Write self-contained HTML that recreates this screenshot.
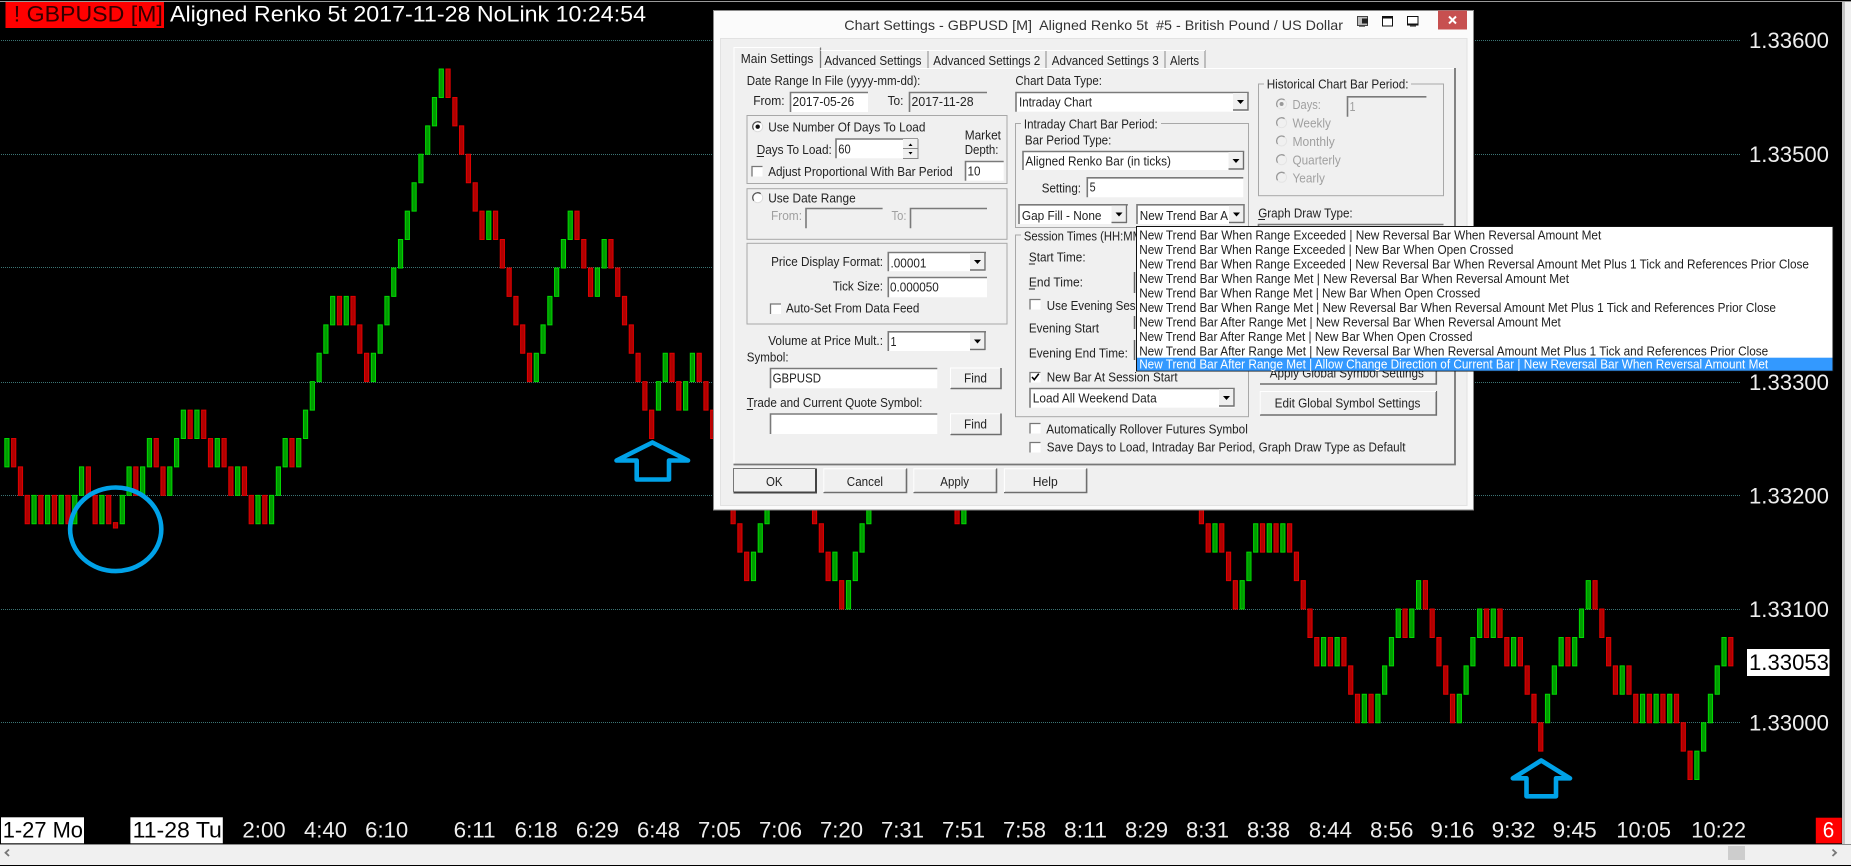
<!DOCTYPE html>
<html>
<head>
<meta charset="utf-8">
<title>Chart Settings</title>
<style>
html,body{margin:0;padding:0;background:#000;overflow:hidden}
svg{display:block}
text{font-family:"Liberation Sans",sans-serif;white-space:pre}
.c{fill:#eee;font-size:22px}
.k{fill:#000;font-size:22px}
.t{fill:#222;font-size:13px}
.d{fill:#a0a0a0;font-size:13px}
.l{fill:#222;font-size:13px}
.f{fill:#fff}
.g{fill:#f0f0f0}
.s{fill:none;stroke:#7a7a7a;stroke-width:1.6}
.b{fill:#f0f0f0}
.bd{fill:none;stroke:#6e6e6e;stroke-width:1.6}
.bw{fill:none;stroke:#fff;stroke-width:1}
.gb{fill:none;stroke:#a8a8a8;stroke-width:1}
.u{stroke:#222;stroke-width:1}
</style>
</head>
<body>
<svg width="1851" height="866" viewBox="0 0 1851 866" xmlns="http://www.w3.org/2000/svg">
<defs>
<g id="rad"><circle r="5" fill="#fff" stroke="#ddd"/><path d="M-4 3A5 5 0 0 1 3-4" fill="none" stroke="#555" stroke-width="1.3"/></g>
<g id="radg"><circle r="5" fill="#f0f0f0" stroke="#e4e4e4"/><path d="M-4 3A5 5 0 0 1 3-4" fill="none" stroke="#999" stroke-width="1.3"/></g>
<g id="chk"><rect width="11" height="10.5" fill="#fff"/><path d="M.5 10.5V.5H11" fill="none" stroke="#777" stroke-width="1.3"/></g>
<g id="arr"><rect width="15" height="17" fill="#f0f0f0"/><path d="M15 0V17H0" fill="none" stroke="#6e6e6e" stroke-width="1.4"/><path d="M4 7h7l-3.5 4z" fill="#000"/></g>
</defs>

<rect width="1851" height="866" fill="#000"/>
<!-- window frame -->
<rect y="1" width="1851" height="1" fill="#9a9a9a"/>
<rect x="1842" y="2" width="3" height="842" fill="#c4c4c4"/>
<rect x="1845" y="2" width="6" height="842" fill="#f0f0f0"/>

<!-- grid -->
<g stroke="#3c7474" stroke-width="1" stroke-dasharray="1 1" shape-rendering="crispEdges">
<path d="M1 40.5H1741M1 154.5H1741M1 267.5H1741M1 382.5H1741M1 495.5H1741M1 609.5H1741M1 722.5H1741"/>
</g>

<!-- renko bars -->
<g transform="translate(4.8,722.7) scale(6.787,-28.42)">
<path fill="#009c00" stroke="#00d800" stroke-width="1" vector-effect="non-scaling-stroke" d="M0 9h.62v1h-.62zM4 7h.62v1h-.62zM6 7h.62v1h-.62zM8 7h.62v1h-.62zM10 7h.62v1h-.62zM11 8h.62v1h-.62zM14 7h.62v1h-.62zM17 7h.62v1h-.62zM18 8h.62v1h-.62zM20 8h.62v1h-.62zM21 9h.62v1h-.62zM24 8h.62v1h-.62zM25 9h.62v1h-.62zM26 10h.62v1h-.62zM28 10h.62v1h-.62zM31 9h.62v1h-.62zM34 8h.62v1h-.62zM37 7h.62v1h-.62zM39 7h.62v1h-.62zM40 8h.62v1h-.62zM41 9h.62v1h-.62zM43 9h.62v1h-.62zM44 10h.62v1h-.62zM45 11h.62v1h-.62zM46 12h.62v1h-.62zM47 13h.62v1h-.62zM48 14h.62v1h-.62zM50 14h.62v1h-.62zM54 12h.62v1h-.62zM55 13h.62v1h-.62zM56 14h.62v1h-.62zM57 15h.62v1h-.62zM58 16h.62v1h-.62zM59 17h.62v1h-.62zM60 18h.62v1h-.62zM61 19h.62v1h-.62zM62 20h.62v1h-.62zM63 21h.62v1h-.62zM64 22h.62v1h-.62zM71 17h.62v1h-.62zM78 12h.62v1h-.62zM79 13h.62v1h-.62zM80 14h.62v1h-.62zM81 15h.62v1h-.62zM82 16h.62v1h-.62zM83 17h.62v1h-.62zM87 15h.62v1h-.62zM88 16h.62v1h-.62zM96 11h.62v1h-.62zM97 12h.62v1h-.62zM100 11h.62v1h-.62zM101 12h.62v1h-.62zM110 5h.62v1h-.62zM111 6h.62v1h-.62zM112 7h.62v1h-.62zM122 5h.62v1h-.62zM124 4h.62v1h-.62zM125 5h.62v1h-.62zM126 6h.62v1h-.62zM127 7h.62v1h-.62zM141 7h.62v1h-.62zM178 6h.62v1h-.62zM182 4h.62v1h-.62zM183 5h.62v1h-.62zM184 6h.62v1h-.62zM186 6h.62v1h-.62zM188 6h.62v1h-.62zM194 2h.62v1h-.62zM196 2h.62v1h-.62zM200 0h.62v1h-.62zM202 0h.62v1h-.62zM203 1h.62v1h-.62zM204 2h.62v1h-.62zM205 3h.62v1h-.62zM207 3h.62v1h-.62zM208 4h.62v1h-.62zM214 0h.62v1h-.62zM215 1h.62v1h-.62zM216 2h.62v1h-.62zM217 3h.62v1h-.62zM219 3h.62v1h-.62zM222 2h.62v1h-.62zM227 0h.62v1h-.62zM228 1h.62v1h-.62zM229 2h.62v1h-.62zM231 2h.62v1h-.62zM232 3h.62v1h-.62zM233 4h.62v1h-.62zM238 1h.62v1h-.62zM241 0h.62v1h-.62zM243 0h.62v1h-.62zM245 0h.62v1h-.62zM249-2h.62v1h-.62zM250-1h.62v1h-.62zM251 0h.62v1h-.62zM252 1h.62v1h-.62zM253 2h.62v1h-.62z"/>
<path fill="#b00000" stroke="#e00000" stroke-width="1" vector-effect="non-scaling-stroke" d="M1 9h.62v1h-.62zM2 8h.62v1h-.62zM3 7h.62v1h-.62zM5 7h.62v1h-.62zM7 7h.62v1h-.62zM9 7h.62v1h-.62zM12 8h.62v1h-.62zM13 7h.62v1h-.62zM15 7h.62v1h-.62zM16 6.85h.62v.19h-.62zM19 8h.62v1h-.62zM22 9h.62v1h-.62zM23 8h.62v1h-.62zM27 10h.62v1h-.62zM29 10h.62v1h-.62zM30 9h.62v1h-.62zM32 9h.62v1h-.62zM33 8h.62v1h-.62zM35 8h.62v1h-.62zM36 7h.62v1h-.62zM38 7h.62v1h-.62zM42 9h.62v1h-.62zM49 14h.62v1h-.62zM51 14h.62v1h-.62zM52 13h.62v1h-.62zM53 12h.62v1h-.62zM65 22h.62v1h-.62zM66 21h.62v1h-.62zM67 20h.62v1h-.62zM68 19h.62v1h-.62zM69 18h.62v1h-.62zM70 17h.62v1h-.62zM72 17h.62v1h-.62zM73 16h.62v1h-.62zM74 15h.62v1h-.62zM75 14h.62v1h-.62zM76 13h.62v1h-.62zM77 12h.62v1h-.62zM84 17h.62v1h-.62zM85 16h.62v1h-.62zM86 15h.62v1h-.62zM89 16h.62v1h-.62zM90 15h.62v1h-.62zM91 14h.62v1h-.62zM92 13h.62v1h-.62zM93 12h.62v1h-.62zM94 11h.62v1h-.62zM95 10h.62v1h-.62zM98 12h.62v1h-.62zM99 11h.62v1h-.62zM102 12h.62v1h-.62zM103 11h.62v1h-.62zM104 10h.62v1h-.62zM107 7h.62v1h-.62zM108 6h.62v1h-.62zM109 5h.62v1h-.62zM119 7h.62v1h-.62zM120 6h.62v1h-.62zM121 5h.62v1h-.62zM123 4h.62v1h-.62zM140 7h.62v1h-.62zM176 7h.62v1h-.62zM177 6h.62v1h-.62zM179 6h.62v1h-.62zM180 5h.62v1h-.62zM181 4h.62v1h-.62zM185 6h.62v1h-.62zM187 6h.62v1h-.62zM189 6h.62v1h-.62zM190 5h.62v1h-.62zM191 4h.62v1h-.62zM192 3h.62v1h-.62zM193 2h.62v1h-.62zM195 2h.62v1h-.62zM197 2h.62v1h-.62zM198 1h.62v1h-.62zM199 0h.62v1h-.62zM201 0h.62v1h-.62zM206 3h.62v1h-.62zM209 4h.62v1h-.62zM210 3h.62v1h-.62zM211 2h.62v1h-.62zM212 1h.62v1h-.62zM213 0h.62v1h-.62zM218 3h.62v1h-.62zM220 3h.62v1h-.62zM221 2h.62v1h-.62zM223 2h.62v1h-.62zM224 1h.62v1h-.62zM225 0h.62v1h-.62zM226-1h.62v1h-.62zM230 2h.62v1h-.62zM234 4h.62v1h-.62zM235 3h.62v1h-.62zM236 2h.62v1h-.62zM237 1h.62v1h-.62zM239 1h.62v1h-.62zM240 0h.62v1h-.62zM242 0h.62v1h-.62zM244 0h.62v1h-.62zM246 0h.62v1h-.62zM247-1h.62v1h-.62zM248-2h.62v1h-.62zM254 2h.62v1h-.62z"/>
</g>

<!-- annotations -->
<ellipse cx="115.7" cy="529.3" rx="45.6" ry="41.8" fill="none" stroke="#00a2e8" stroke-width="4.6"/>
<path d="M652.4 442.5L688 460.5H669V479.5H636.7V460.5H616.5Z" fill="none" stroke="#00a2e8" stroke-width="4.6" stroke-linejoin="round"/>
<path d="M1541.2 760.5L1570 778.3H1556V796.3H1526.5V778.3H1512.8Z" fill="none" stroke="#00a2e8" stroke-width="4.6" stroke-linejoin="round"/>

<!-- header -->
<rect x="5.5" y="2" width="158.5" height="26" fill="#f00"/>
<text x="13.8" y="21.7" font-size="22" fill="#300" textLength="149" lengthAdjust="spacingAndGlyphs">! GBPUSD [M]</text>
<text x="170" y="21.7" font-size="22" fill="#fff" textLength="476" lengthAdjust="spacingAndGlyphs">Aligned Renko 5t 2017-11-28 NoLink 10:24:54</text>

<!-- price axis -->
<text class="c" x="1749" y="48" textLength="80" lengthAdjust="spacingAndGlyphs">1.33600</text>
<text class="c" x="1749" y="162" textLength="80" lengthAdjust="spacingAndGlyphs">1.33500</text>
<text class="c" x="1749" y="275.5" textLength="80" lengthAdjust="spacingAndGlyphs">1.33400</text>
<text class="c" x="1749" y="390" textLength="80" lengthAdjust="spacingAndGlyphs">1.33300</text>
<text class="c" x="1749" y="503.5" textLength="80" lengthAdjust="spacingAndGlyphs">1.33200</text>
<text class="c" x="1749" y="617" textLength="80" lengthAdjust="spacingAndGlyphs">1.33100</text>
<rect x="1747" y="649" width="82.5" height="27" fill="#fff"/>
<text class="k" x="1749" y="670" textLength="80" lengthAdjust="spacingAndGlyphs">1.33053</text>
<text class="c" x="1749" y="730.5" textLength="80" lengthAdjust="spacingAndGlyphs">1.33000</text>

<!-- time axis -->
<rect x="1" y="817.3" width="83" height="26" fill="#fff"/>
<text class="k" x="2.7" y="837.3" textLength="80.3" lengthAdjust="spacingAndGlyphs">1-27 Mo</text>
<rect x="130.4" y="817.3" width="92.4" height="26" fill="#fff"/>
<text class="k" x="132.6" y="837.3" textLength="89.3" lengthAdjust="spacingAndGlyphs">11-28 Tu</text>
<g class="c">
<text class="c" x="242.4" y="837.3" textLength="43.3" lengthAdjust="spacingAndGlyphs">2:00</text>
<text class="c" x="304" y="837.3" textLength="43" lengthAdjust="spacingAndGlyphs">4:40</text>
<text class="c" x="365.2" y="837.3" textLength="43" lengthAdjust="spacingAndGlyphs">6:10</text>
<text class="c" x="453.6" y="837.3" textLength="42" lengthAdjust="spacingAndGlyphs">6:11</text>
<text class="c" x="514.7" y="837.3" textLength="43" lengthAdjust="spacingAndGlyphs">6:18</text>
<text class="c" x="575.9" y="837.3" textLength="43" lengthAdjust="spacingAndGlyphs">6:29</text>
<text class="c" x="637" y="837.3" textLength="43" lengthAdjust="spacingAndGlyphs">6:48</text>
<text class="c" x="698" y="837.3" textLength="43" lengthAdjust="spacingAndGlyphs">7:05</text>
<text class="c" x="759" y="837.3" textLength="43" lengthAdjust="spacingAndGlyphs">7:06</text>
<text class="c" x="820" y="837.3" textLength="43" lengthAdjust="spacingAndGlyphs">7:20</text>
<text class="c" x="881" y="837.3" textLength="43" lengthAdjust="spacingAndGlyphs">7:31</text>
<text class="c" x="942" y="837.3" textLength="43" lengthAdjust="spacingAndGlyphs">7:51</text>
<text class="c" x="1003" y="837.3" textLength="43" lengthAdjust="spacingAndGlyphs">7:58</text>
<text class="c" x="1064" y="837.3" textLength="43" lengthAdjust="spacingAndGlyphs">8:11</text>
<text class="c" x="1125" y="837.3" textLength="43" lengthAdjust="spacingAndGlyphs">8:29</text>
<text class="c" x="1186" y="837.3" textLength="43" lengthAdjust="spacingAndGlyphs">8:31</text>
<text class="c" x="1247" y="837.3" textLength="43" lengthAdjust="spacingAndGlyphs">8:38</text>
<text class="c" x="1308.9" y="837.3" textLength="43" lengthAdjust="spacingAndGlyphs">8:44</text>
<text class="c" x="1370" y="837.3" textLength="43.4" lengthAdjust="spacingAndGlyphs">8:56</text>
<text class="c" x="1430.4" y="837.3" textLength="44" lengthAdjust="spacingAndGlyphs">9:16</text>
<text class="c" x="1491.6" y="837.3" textLength="44" lengthAdjust="spacingAndGlyphs">9:32</text>
<text class="c" x="1552.7" y="837.3" textLength="44" lengthAdjust="spacingAndGlyphs">9:45</text>
<text class="c" x="1616.4" y="837.3" textLength="54.6" lengthAdjust="spacingAndGlyphs">10:05</text>
<text class="c" x="1691.3" y="837.3" textLength="54.7" lengthAdjust="spacingAndGlyphs">10:22</text>
</g>
<rect x="1815.8" y="817.7" width="26" height="25.6" fill="#f00"/>
<text x="1822.8" y="837.3" font-size="22" fill="#fff" textLength="11.5" lengthAdjust="spacingAndGlyphs">6</text>

<!-- scrollbar -->
<rect y="844" width="1851" height="21" fill="#f0f0f0"/>
<rect y="844" width="1851" height="1" fill="#8a8a8a"/>
<rect y="865" width="1851" height="1" fill="#000"/>
<rect x="1728" y="846" width="17" height="14" fill="#cdcdcd"/>
<path d="M9 849.5L5.5 852.7L9 856M1832.5 849.5L1836 852.7L1832.5 856" fill="none" stroke="#777" stroke-width="1.8"/>

<!-- DIALOG -->
<rect x="713.5" y="10.5" width="760" height="499.5" fill="#fbfbfb" stroke="#8a8a8a"/>
<text x="844.3" y="30" font-size="14" fill="#333" textLength="498.7" lengthAdjust="spacingAndGlyphs">Chart Settings - GBPUSD [M]  Aligned Renko 5t  #5 - British Pound / US Dollar</text>
<!-- title icons -->
<rect x="1357.5" y="16.5" width="10" height="9" fill="#bbb" stroke="#444"/><rect x="1362" y="18.5" width="6" height="5" fill="#222"/><rect x="1359" y="26" width="6" height="1" fill="#777"/>
<rect x="1382.5" y="16.5" width="10" height="9.5" fill="#fff" stroke="#111"/><rect x="1382" y="16" width="11" height="2.5" fill="#111"/>
<rect x="1407.5" y="16.5" width="10.5" height="8.5" fill="#fff" stroke="#111"/><rect x="1407" y="23.5" width="11.5" height="2" fill="#111"/><rect x="1410" y="25.5" width="6" height="1.2" fill="#555"/>
<rect x="1438" y="10.5" width="29" height="19" fill="#c75050"/>
<path d="M1449 16.5L1456 23.5M1456 16.5L1449 23.5" stroke="#fff" stroke-width="2"/>

<rect x="720.5" y="38.5" width="746.5" height="467" fill="#f0f0f0" stroke="#e2e2e2"/>

<!-- tab panel -->
<path d="M734 464V68.5H1454" fill="none" stroke="#fff"/>
<path d="M733.5 464.5H1455V68" fill="none" stroke="#777" stroke-width="1.8"/>
<rect x="734" y="47.5" width="86.5" height="21.5" fill="#f0f0f0"/>
<path d="M734 69V47.5H820" fill="none" stroke="#fff"/><path d="M820.5 47.5V68" fill="none" stroke="#777" stroke-width="1.3"/>
<path d="M820.5 50.5H928M928 50V68M928.5 50.5H1046M1046 50V68M1046.5 50.5H1165M1165 50V68M1165.5 50.5H1205M1205 50V68" fill="none" stroke="#8a8a8a" stroke-width="1"/>
<path d="M820.5 50.5H1205" fill="none" stroke="#fff"/>
<text class="t" x="740.8" y="63" textLength="72.6" lengthAdjust="spacingAndGlyphs">Main Settings</text>
<text class="t" x="824.4" y="65" textLength="97" lengthAdjust="spacingAndGlyphs">Advanced Settings</text>
<text class="t" x="933.3" y="65" textLength="107" lengthAdjust="spacingAndGlyphs">Advanced Settings 2</text>
<text class="t" x="1051.7" y="65" textLength="107" lengthAdjust="spacingAndGlyphs">Advanced Settings 3</text>
<text class="t" x="1170" y="65" textLength="29" lengthAdjust="spacingAndGlyphs">Alerts</text>

<!-- left column -->
<text class="t" x="746.8" y="85" textLength="173.6" lengthAdjust="spacingAndGlyphs">Date Range In File (yyyy-mm-dd):</text>
<text class="t" x="753.2" y="105" textLength="31.4" lengthAdjust="spacingAndGlyphs">From:</text>
<rect class="f" x="790" y="92" width="78" height="20"/><path class="s" d="M790.5 112V92.5H868"/>
<text class="t" x="792.5" y="106" textLength="61.7" lengthAdjust="spacingAndGlyphs">2017-05-26</text>
<text class="t" x="887.6" y="105" textLength="15.9" lengthAdjust="spacingAndGlyphs">To:</text>
<rect class="g" x="909" y="92" width="78" height="20"/><path class="s" d="M909.5 112V92.5H987"/>
<text class="t" x="911.5" y="106" textLength="62.1" lengthAdjust="spacingAndGlyphs">2017-11-28</text>

<rect class="gb" x="747" y="115.5" width="260" height="68"/>
<use href="#rad" x="757.7" y="126.7"/><circle cx="757.7" cy="126.7" r="2.2" fill="#111"/>
<text class="t" x="768.2" y="131.7" textLength="157.2" lengthAdjust="spacingAndGlyphs">Use Number Of Days To Load</text>
<text class="t" x="964.7" y="139.3" textLength="36.3" lengthAdjust="spacingAndGlyphs">Market</text>
<text class="t" x="964.7" y="154" textLength="33.8" lengthAdjust="spacingAndGlyphs">Depth:</text>
<text class="t" x="756.7" y="154" textLength="75.1" lengthAdjust="spacingAndGlyphs">Days To Load:</text>
<path class="u" d="M756.7 156.5H764"/>
<rect class="f" x="835.3" y="138.3" width="83" height="20"/><path class="s" d="M836 158.3V139H918"/>
<text class="t" x="838.3" y="153.3" textLength="12.4" lengthAdjust="spacingAndGlyphs">60</text>
<rect x="903" y="139" width="15" height="9.5" fill="#f0f0f0"/><rect x="903" y="149" width="15" height="9.5" fill="#f0f0f0"/>
<path d="M903 148.5H918V139M903 158.5H918V149" fill="none" stroke="#888"/>
<path d="M908.5 146h4l-2-2.5zM908.5 152h4l-2 2.5z" fill="#000"/>
<use href="#chk" x="751.5" y="166"/>
<text class="t" x="768.2" y="176" textLength="184.5" lengthAdjust="spacingAndGlyphs">Adjust Proportional With Bar Period</text>
<rect class="f" x="964.7" y="160.7" width="39" height="20"/><path class="s" d="M965.5 180.7V161.5H1003.7"/>
<text class="t" x="967.5" y="175.7" textLength="13" lengthAdjust="spacingAndGlyphs">10</text>

<rect class="gb" x="747" y="188.7" width="260" height="50.6"/>
<use href="#rad" x="757.7" y="197.7"/>
<text class="t" x="768.2" y="202.3" textLength="87.5" lengthAdjust="spacingAndGlyphs">Use Date Range</text>
<text class="d" x="771" y="220" textLength="31" lengthAdjust="spacingAndGlyphs">From:</text>
<rect class="g" x="805.5" y="207.7" width="77" height="20.6"/><path class="s" d="M806 228.3V208.5H882.6"/>
<text class="d" x="891.5" y="220" textLength="15" lengthAdjust="spacingAndGlyphs">To:</text>
<rect class="g" x="910" y="207.7" width="77" height="20.6"/><path class="s" d="M910.5 228.3V208.5H987"/>

<rect class="gb" x="747" y="243.3" width="260" height="80.7"/>
<text class="t" x="771.1" y="266" textLength="111.9" lengthAdjust="spacingAndGlyphs">Price Display Format:</text>
<rect class="f" x="887.6" y="251.7" width="98.4" height="19.5"/><path class="s" d="M888.3 271.2V252.5H986"/>
<text class="t" x="890.5" y="267.3" textLength="35.9" lengthAdjust="spacingAndGlyphs">.00001</text>
<use href="#arr" x="970" y="253"/>
<text class="t" x="832.8" y="290.7" textLength="50.2" lengthAdjust="spacingAndGlyphs">Tick Size:</text>
<rect class="f" x="887.6" y="276.7" width="99.4" height="20.6"/><path class="s" d="M888.3 297.3V277.5H987"/>
<text class="t" x="890" y="291.7" textLength="48.8" lengthAdjust="spacingAndGlyphs">0.000050</text>
<use href="#chk" x="770" y="303.5"/>
<text class="t" x="786" y="312.7" textLength="133.4" lengthAdjust="spacingAndGlyphs">Auto-Set From Data Feed</text>

<text class="t" x="768.2" y="345" textLength="114.8" lengthAdjust="spacingAndGlyphs">Volume at Price Mult.:</text>
<rect class="f" x="887.6" y="331" width="98.4" height="20"/><path class="s" d="M888.3 351V331.8H986"/>
<text class="t" x="890.5" y="346" textLength="6" lengthAdjust="spacingAndGlyphs">1</text>
<use href="#arr" x="970" y="332.5"/>
<text class="t" x="746.8" y="361.7" textLength="41.8" lengthAdjust="spacingAndGlyphs">Symbol:</text>
<rect class="f" x="769.7" y="367.7" width="167.6" height="20.6"/><path class="s" d="M770.5 388.3V368.5H937.3"/>
<text class="t" x="772.6" y="382.7" textLength="48.4" lengthAdjust="spacingAndGlyphs">GBPUSD</text>
<rect class="b" x="950.2" y="367.7" width="51.3" height="21.3"/><path class="bd" d="M950.5 388.5H1001V368"/><path class="bw" d="M950.5 388V368H1000"/>
<text class="t" x="964" y="382.7" textLength="23" lengthAdjust="spacingAndGlyphs">Find</text>
<text class="t" x="746.8" y="407" textLength="175.6" lengthAdjust="spacingAndGlyphs">Trade and Current Quote Symbol:</text>
<path class="u" d="M746.8 409.5H753"/>
<rect class="f" x="769.7" y="413.3" width="167.6" height="20.7"/><path class="s" d="M770.5 434V414H937.3"/>
<rect class="b" x="950.2" y="413.3" width="51.3" height="21.7"/><path class="bd" d="M950.5 434.5H1001V413.5"/><path class="bw" d="M950.5 434V413.8H1000"/>
<text class="t" x="964" y="428.3" textLength="23" lengthAdjust="spacingAndGlyphs">Find</text>

<!-- bottom buttons -->
<rect class="b" x="733.3" y="468.3" width="82.7" height="24.4"/><path d="M733.5 492.5H816V468.5" fill="none" stroke="#444" stroke-width="2"/><path d="M733.5 492V468.5H815.5" fill="none" stroke="#777"/>
<text class="t" x="766" y="486" textLength="16.6" lengthAdjust="spacingAndGlyphs">OK</text>
<rect class="b" x="823.4" y="468.3" width="83" height="24.4"/><path class="bd" d="M823.5 492.5H906.5V468.5"/><path class="bw" d="M823.8 492V468.8H906"/>
<text class="t" x="846.8" y="486" textLength="36.2" lengthAdjust="spacingAndGlyphs">Cancel</text>
<rect class="b" x="913.4" y="468.3" width="83" height="24.4"/><path class="bd" d="M913.5 492.5H996.5V468.5"/><path class="bw" d="M913.8 492V468.8H996"/>
<text class="t" x="940.3" y="486" textLength="28.7" lengthAdjust="spacingAndGlyphs">Apply</text>
<rect class="b" x="1004" y="468.3" width="82.6" height="24.4"/><path class="bd" d="M1004 492.5H1086.6V468.5"/><path class="bw" d="M1004.4 492V468.8H1086"/>
<text class="t" x="1032.8" y="486" textLength="24.9" lengthAdjust="spacingAndGlyphs">Help</text>

<!-- middle column -->
<text class="t" x="1015.4" y="85" textLength="86.6" lengthAdjust="spacingAndGlyphs">Chart Data Type:</text>
<rect class="f" x="1015.4" y="91.7" width="233.4" height="20"/><path class="s" d="M1016 111.7V92.5H1248.8"/>
<text class="t" x="1019" y="106.7" textLength="73" lengthAdjust="spacingAndGlyphs">Intraday Chart</text>
<use href="#arr" x="1233" y="93"/>

<rect class="gb" x="1015.5" y="123.5" width="233" height="104"/>
<rect class="g" x="1021" y="117" width="140" height="12"/>
<text class="t" x="1023.9" y="128.3" textLength="133.8" lengthAdjust="spacingAndGlyphs">Intraday Chart Bar Period:</text>
<text class="t" x="1024.9" y="144.3" textLength="86.5" lengthAdjust="spacingAndGlyphs">Bar Period Type:</text>
<rect class="f" x="1022.4" y="150.7" width="221.9" height="19.3"/><path class="s" d="M1023 170V151.5H1244.3"/>
<text class="t" x="1025.4" y="165.7" textLength="145.6" lengthAdjust="spacingAndGlyphs">Aligned Renko Bar (in ticks)</text>
<use href="#arr" x="1228.5" y="152"/>
<text class="t" x="1041.8" y="192.3" textLength="39.2" lengthAdjust="spacingAndGlyphs">Setting:</text>
<rect class="f" x="1086.6" y="177" width="156.7" height="20.3"/><path class="s" d="M1087.3 197.3V177.8H1243.3"/>
<text class="t" x="1089.6" y="191.7" textLength="6" lengthAdjust="spacingAndGlyphs">5</text>
<rect class="f" x="1018.4" y="204" width="109.5" height="20"/><path class="s" d="M1019 224V204.8H1127.9"/>
<text class="t" x="1021.9" y="220" textLength="79.6" lengthAdjust="spacingAndGlyphs">Gap Fill - None</text>
<use href="#arr" x="1111.5" y="205.5"/>
<rect class="f" x="1136.3" y="204" width="108.5" height="20"/><path class="s" d="M1137 224V204.8H1244.8"/>
<text class="t" x="1139.8" y="220" textLength="88.2" lengthAdjust="spacingAndGlyphs">New Trend Bar A</text>
<use href="#arr" x="1229" y="205.5"/>

<rect class="gb" x="1015.5" y="235" width="233" height="181.7"/>
<rect class="g" x="1021" y="229" width="116" height="12"/>
<text class="t" x="1023.9" y="240.7" textLength="125" lengthAdjust="spacingAndGlyphs">Session Times (HH:MM):</text>
<text class="t" x="1028.9" y="261.7" textLength="56.7" lengthAdjust="spacingAndGlyphs">Start Time:</text>
<path class="u" d="M1028.9 264H1035"/>
<text class="t" x="1028.9" y="286.7" textLength="54.1" lengthAdjust="spacingAndGlyphs">End Time:</text>
<path class="u" d="M1028.9 289H1035"/>
<use href="#chk" x="1029.5" y="299"/>
<text class="t" x="1046.8" y="310" textLength="110" lengthAdjust="spacingAndGlyphs">Use Evening Session</text>
<text class="t" x="1028.9" y="332.3" textLength="70.1" lengthAdjust="spacingAndGlyphs">Evening Start</text>
<text class="t" x="1028.9" y="357.7" textLength="99" lengthAdjust="spacingAndGlyphs">Evening End Time:</text>
<use href="#chk" x="1029.5" y="372"/>
<path d="M1032 377l2.3 2.6 4.5-5.8" fill="none" stroke="#000" stroke-width="1.6"/>
<text class="t" x="1046.8" y="381.7" textLength="130.8" lengthAdjust="spacingAndGlyphs">New Bar At Session Start</text>
<rect class="f" x="1029.4" y="387.7" width="205.4" height="20"/><path class="s" d="M1030 407.7V388.5H1234.8"/>
<text class="t" x="1032.8" y="402.7" textLength="123.9" lengthAdjust="spacingAndGlyphs">Load All Weekend Data</text>
<use href="#arr" x="1219" y="389"/>
<use href="#chk" x="1029.5" y="423"/>
<text class="t" x="1046.3" y="433.3" textLength="201.5" lengthAdjust="spacingAndGlyphs">Automatically Rollover Futures Symbol</text>
<use href="#chk" x="1029.5" y="442"/>
<text class="t" x="1046.8" y="451.7" textLength="358.7" lengthAdjust="spacingAndGlyphs">Save Days to Load, Intraday Bar Period, Graph Draw Type as Default</text>

<!-- right column -->
<rect class="gb" x="1258.5" y="84" width="185" height="111.7"/>
<rect class="g" x="1264" y="78" width="147" height="12"/>
<text class="t" x="1266.7" y="88.3" textLength="141.8" lengthAdjust="spacingAndGlyphs">Historical Chart Bar Period:</text>
<use href="#radg" x="1281.6" y="104"/><circle cx="1281.6" cy="104" r="2" fill="#999"/>
<text class="d" x="1292.5" y="109" textLength="28.4" lengthAdjust="spacingAndGlyphs">Days:</text>
<rect class="g" x="1346.8" y="96" width="79.6" height="20.7"/><path class="s" d="M1347.5 116.7V96.8H1426.4"/>
<text class="d" x="1349.5" y="111" textLength="6" lengthAdjust="spacingAndGlyphs">1</text>
<use href="#radg" x="1281.6" y="122.7"/>
<text class="d" x="1292.5" y="127.7" textLength="38.4" lengthAdjust="spacingAndGlyphs">Weekly</text>
<use href="#radg" x="1281.6" y="141"/>
<text class="d" x="1292.5" y="146" textLength="42.3" lengthAdjust="spacingAndGlyphs">Monthly</text>
<use href="#radg" x="1281.6" y="159.7"/>
<text class="d" x="1292.5" y="164.7" textLength="48.3" lengthAdjust="spacingAndGlyphs">Quarterly</text>
<use href="#radg" x="1281.6" y="177.3"/>
<text class="d" x="1292.5" y="182.7" textLength="32.4" lengthAdjust="spacingAndGlyphs">Yearly</text>
<text class="t" x="1258.2" y="217.3" textLength="94.5" lengthAdjust="spacingAndGlyphs">Graph Draw Type:</text>
<path class="u" d="M1258.2 219.5H1265"/>
<path class="s" d="M1258.5 232V224.5H1443.5"/>

<rect class="b" x="1259.7" y="358" width="176.6" height="26.3"/><path class="bd" d="M1260 384H1436.3V358"/>
<text class="t" x="1269.7" y="377.3" textLength="154.2" lengthAdjust="spacingAndGlyphs">Apply Global Symbol Settings</text>
<rect class="b" x="1259.7" y="391" width="176.6" height="24.3"/><path class="bd" d="M1260 415H1436.3V391"/><path class="bw" d="M1260.2 414.5V391.5H1436"/>
<text class="t" x="1274.6" y="407.7" textLength="145.8" lengthAdjust="spacingAndGlyphs">Edit Global Symbol Settings</text>

<path d="M1134.5 272V293M1134.5 316V329M1134.5 340V360" stroke="#666" stroke-width="1.5" fill="none"/>

<!-- dropdown -->
<rect x="1136.5" y="226.5" width="696.5" height="144.5" fill="#fff" stroke="#111"/>
<rect x="1137" y="357.7" width="695.5" height="13" fill="#3399ff"/>
<text class="l" x="1139.2" y="239.3" textLength="462.1" lengthAdjust="spacingAndGlyphs">New Trend Bar When Range Exceeded | New Reversal Bar When Reversal Amount Met</text>
<text class="l" x="1139.2" y="253.8" textLength="374.2" lengthAdjust="spacingAndGlyphs">New Trend Bar When Range Exceeded | New Bar When Open Crossed</text>
<text class="l" x="1139.2" y="268.4" textLength="669.8" lengthAdjust="spacingAndGlyphs">New Trend Bar When Range Exceeded | New Reversal Bar When Reversal Amount Met Plus 1 Tick and References Prior Close</text>
<text class="l" x="1139.2" y="282.9" textLength="429.8" lengthAdjust="spacingAndGlyphs">New Trend Bar When Range Met | New Reversal Bar When Reversal Amount Met</text>
<text class="l" x="1139.2" y="297.4" textLength="341.1" lengthAdjust="spacingAndGlyphs">New Trend Bar When Range Met | New Bar When Open Crossed</text>
<text class="l" x="1139.2" y="312" textLength="636.8" lengthAdjust="spacingAndGlyphs">New Trend Bar When Range Met | New Reversal Bar When Reversal Amount Met Plus 1 Tick and References Prior Close</text>
<text class="l" x="1139.2" y="326.5" textLength="421.6" lengthAdjust="spacingAndGlyphs">New Trend Bar After Range Met | New Reversal Bar When Reversal Amount Met</text>
<text class="l" x="1139.2" y="341" textLength="333.3" lengthAdjust="spacingAndGlyphs">New Trend Bar After Range Met | New Bar When Open Crossed</text>
<text class="l" x="1139.2" y="355.5" textLength="629" lengthAdjust="spacingAndGlyphs">New Trend Bar After Range Met | New Reversal Bar When Reversal Amount Met Plus 1 Tick and References Prior Close</text>
<text x="1139.2" y="368.6" font-size="13" fill="#fff" textLength="629" lengthAdjust="spacingAndGlyphs">New Trend Bar After Range Met | Allow Change Direction of Current Bar | New Reversal Bar When Reversal Amount Met</text>
</svg>
</body>
</html>
